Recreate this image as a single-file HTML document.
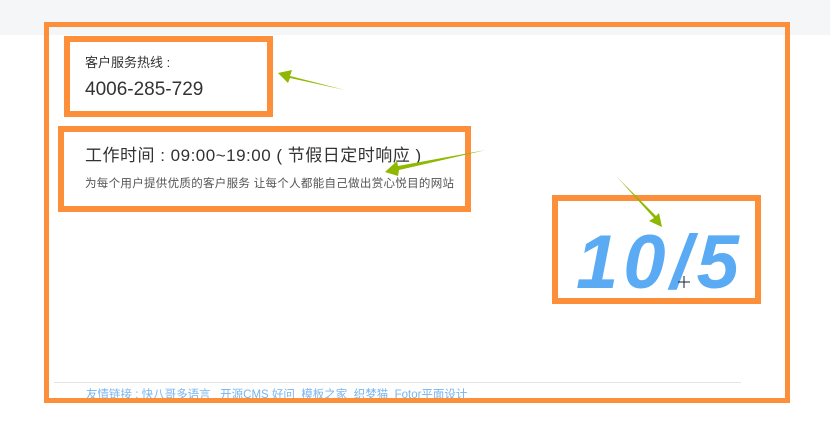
<!DOCTYPE html>
<html><head><meta charset="utf-8"><style>
*{margin:0;padding:0;box-sizing:border-box}
body{width:830px;height:424px;overflow:hidden;background:#fff;position:relative;font-family:"Liberation Sans","Noto Sans CJK SC",sans-serif;color:#333}
.band{position:absolute;left:0;top:0;width:830px;height:35px;background:#f5f6f8}
.ob{position:absolute;border:6px solid #fd8f3b}
.t{position:absolute;white-space:nowrap}
</style></head><body>
<div class="band"></div>
<div style="position:absolute;left:44px;top:35px;width:746px;height:368px;background:#fff"></div>
<div class="ob" style="left:44px;top:22px;width:746px;height:381px;border-width:5px"></div>
<div class="ob" style="left:64px;top:36px;width:209px;height:81px"></div>
<div class="ob" style="left:58px;top:126px;width:413px;height:86px"></div>
<div class="ob" style="left:552px;top:195px;width:209px;height:109px"></div>
<div class="t" style="left:85px;top:52px;font-size:13px;color:#333">客户服务热线 :</div>
<div class="t" style="left:85px;top:79px;font-size:19px;color:#333">4006-285-729</div>
<div class="t" style="left:85px;top:141px;font-size:17px;color:#333;letter-spacing:0.5px">工作时间 : 09:00~19:00 ( 节假日定时响应 )</div>
<div class="t" style="left:85px;top:175px;font-size:11.5px;color:#555;letter-spacing:0.3px">为每个用户提供优质的客户服务 让每个人都能自己做出赏心悦目的网站</div>
<div class="t" style="left:576px;top:218px;font-size:76px;font-weight:bold;font-style:italic;color:#5aabf3;letter-spacing:5px;line-height:90px">10/5</div>
<div style="position:absolute;left:54px;top:382px;width:687px;height:1px;background:#e3e3e3"></div>
<div class="t" style="left:86px;top:386px;font-size:11.5px;color:#78b4ec">友情链接 : 快八哥多语言&nbsp;&nbsp; 开源CMS 好问&nbsp; 模板之家&nbsp; 织梦猫&nbsp; Fotor平面设计</div>
<div style="position:absolute;left:44px;top:398px;width:746px;height:5px;background:#fd8f3b"></div>
<svg style="position:absolute;left:0;top:0" width="830" height="424">
<polygon points="345,90 290,76 292,70 278,73 288,83 290,78" fill="#8fb800"/>
<polygon points="486,150 398,166 397,161 385,172 398,176 399,170" fill="#8fb800"/>
<polygon points="617,177 654,218 649,221 662,227 659,213 656,216" fill="#8fb800"/>
<g stroke="#123" stroke-width="1"><line x1="684" y1="276" x2="684" y2="288"/><line x1="678" y1="282" x2="690" y2="282"/></g>
</svg>
</body></html>
